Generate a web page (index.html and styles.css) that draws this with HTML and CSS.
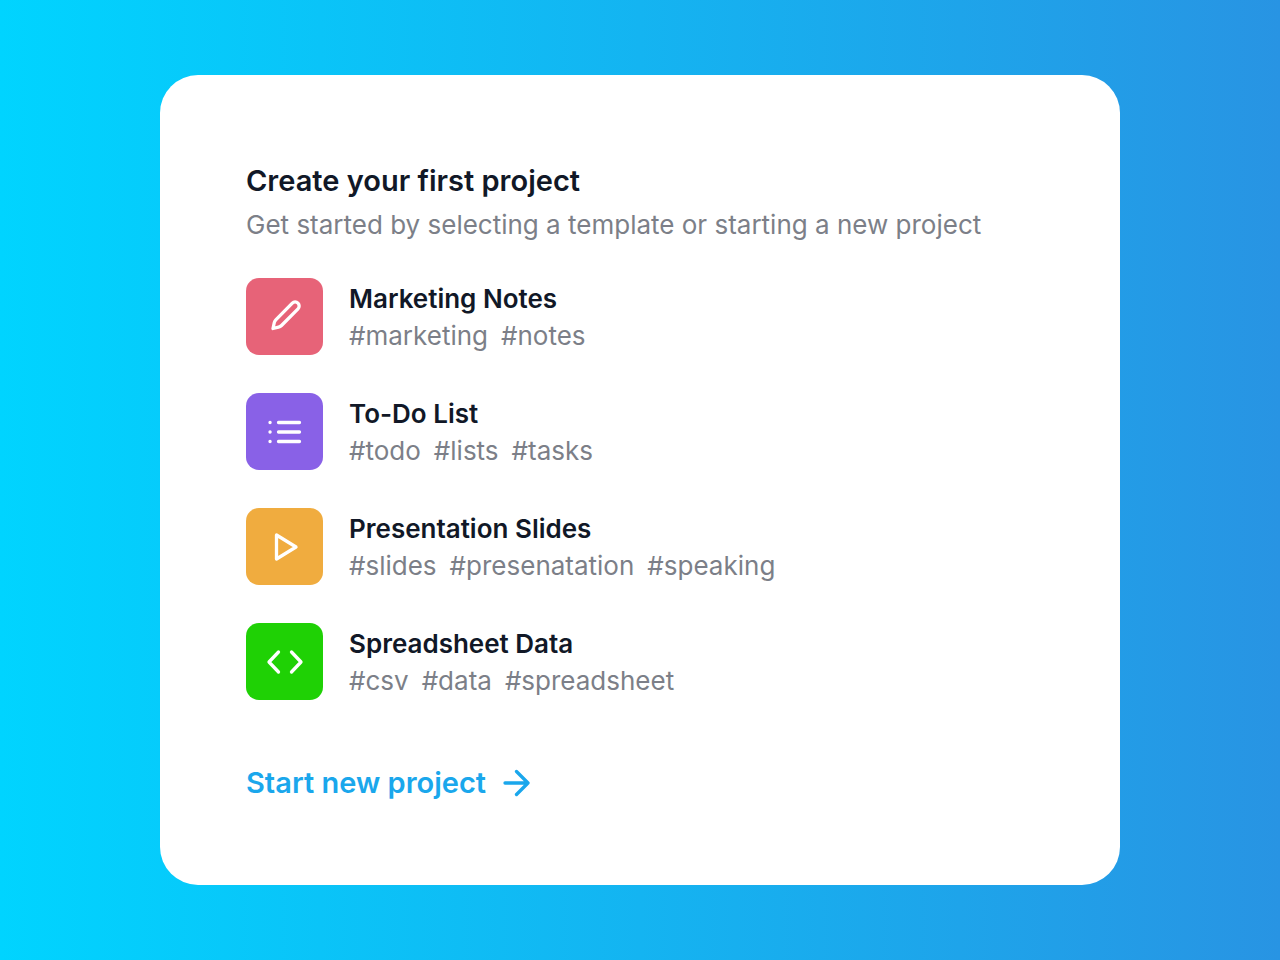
FILE: index.html
```html
<!DOCTYPE html>
<html lang="en">
<head>
  <meta charset="UTF-8">
  <meta name="viewport" content="width=device-width, initial-scale=1.0">
  <title>Create your first project</title>
  <link rel="stylesheet" href="styles.css">
</head>
<body>

<main class="card">
  <h1>Create your first project</h1>
  <p class="intro">Get started by selecting a template or starting a new project</p>

  <ul class="templates">
    <li class="template">
      <span class="icon marketing">
        <svg viewBox="0 0 38 38"><path d="M7 30.500 L8.300 24.500 Q8.600 23 9.800 21.800 L26.300 5.200 A3.900 3.900 0 0 1 32 10.800 L15.500 27.500 Q14.200 28.800 12.500 29.200 Z"/></svg>
      </span>
      <div class="details">
        <h2>Marketing Notes</h2>
        <p class="tags"><span>#marketing</span><span>#notes</span></p>
      </div>
    </li>
    <li class="template">
      <span class="icon todo">
        <svg viewBox="0 0 38 38"><path d="M12.500 9.500H33.500M12.500 19H33.500M12.500 28.500H33.500M4 9.500H4.100M4 19H4.100M4 28.500H4.100"/></svg>
      </span>
      <div class="details">
        <h2>To-Do List</h2>
        <p class="tags"><span>#todo</span><span>#lists</span><span>#tasks</span></p>
      </div>
    </li>
    <li class="template">
      <span class="icon slides">
        <svg viewBox="0 0 38 38"><path d="M10.500 7V31L30 19Z"/></svg>
      </span>
      <div class="details">
        <h2>Presentation Slides</h2>
        <p class="tags"><span>#slides</span><span>#presenatation</span><span>#speaking</span></p>
      </div>
    </li>
    <li class="template">
      <span class="icon data">
        <svg viewBox="0 0 38 38"><path d="M12.500 9L3 19L12.500 29M25.500 9L35 19L25.500 29"/></svg>
      </span>
      <div class="details">
        <h2>Spreadsheet Data</h2>
        <p class="tags"><span>#csv</span><span>#data</span><span>#spreadsheet</span></p>
      </div>
    </li>
  </ul>

  <a href="#" class="start-link">
    Start new project
    <svg class="arrow" viewBox="0 0 28 28"><path d="M3 14H26M14.500 2.500L26 14L14.500 25.500"/></svg>
  </a>
</main>

</body>
</html>
```
FILE: styles.css
```css
/* Basic reset */
*, *::before, *::after {
  box-sizing: border-box;
}

body, h1, h2, p, ul {
  margin: 0;
  padding: 0;
}

body {
  display: flex;
  align-items: center;
  justify-content: center;
  min-height: 100vh;
  background: linear-gradient(to right, #00d4ff, #2894e3);
  font-family: Inter, sans-serif;
  font-size: 26px;
  line-height: 37px;
  color: #111827;
}

/* Card */
.card {
  width: 75%;
  padding: 84px 86px 80px;
  background: #fff;
  border-radius: 38px;
}

h1 {
  font-size: 29px;
  font-weight: 600;
  line-height: 44px;
}

.intro {
  line-height: 44px;
}

.intro, .tags {
  color: #7c7f88;
}

/* Template list */
.templates {
  display: flex;
  flex-direction: column;
  gap: 38px;
  margin-top: 31px;
  list-style: none;
}

.template {
  display: flex;
  align-items: center;
  gap: 26px;
}

.icon {
  display: flex;
  align-items: center;
  justify-content: center;
  flex-shrink: 0;
  width: 77px;
  height: 77px;
  border-radius: 13px;
}

svg {
  fill: none;
  stroke: currentColor;
  stroke-width: 3.3;
  stroke-linecap: round;
  stroke-linejoin: round;
}

.icon svg {
  width: 38px;
  height: 38px;
  color: #fff;
}

.marketing {
  background: #e76378;
}

.todo {
  background: #8961e7;
}

.slides {
  background: #f0ac3f;
}

.data {
  background: #1fd105;
}

h2 {
  font-size: 26px;
  font-weight: 600;
}

.tags {
  display: flex;
  flex-wrap: wrap;
  column-gap: 13px;
}

/* Bottom link */
.start-link {
  display: inline-flex;
  align-items: center;
  gap: 16px;
  margin-top: 61px;
  font-size: 29px;
  font-weight: 600;
  line-height: 44px;
  color: #1aa7ec;
  text-decoration: none;
}

.arrow {
  width: 28px;
  height: 28px;
}
```
